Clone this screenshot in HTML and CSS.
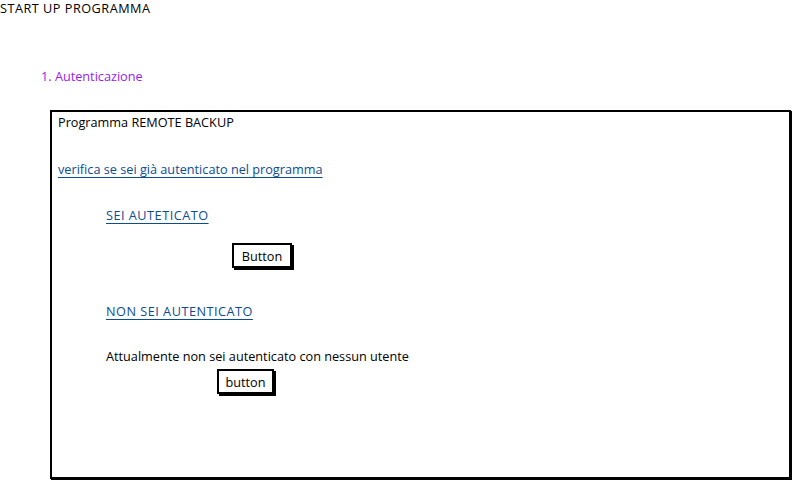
FILE: index.html
```html
<!DOCTYPE html>
<html>
<head>
<meta charset="utf-8">
<link rel="stylesheet" href="styles.css">
</head>
<body>
<div class="title caps">START UP PROGRAMMA</div>
<div class="step">1. Autenticazione</div>
<div class="box">
  <div class="line">Programma REMOTE BACKUP</div>
  <div class="line link gap-verify">verifica se sei già autenticato nel programma</div>
  <div class="line link indent caps gap-sei">SEI AUTETICATO</div>
  <div class="btn btn-one">Button</div>
  <div class="line link indent caps gap-non">NON SEI AUTENTICATO</div>
  <div class="line indent gap-att">Attualmente non sei autenticato con nessun utente</div>
  <div class="btn btn-two">button</div>
</div>
</body>
</html>
```
FILE: styles.css
```css
html, body {
  margin: 0;
  padding: 0;
  background: #fff;
}
body {
  font-family: "Open Sans", "Liberation Sans", sans-serif;
  font-size: 12.7px;
  color: #000;
  width: 793px;
  height: 481px;
  overflow: hidden;
}
.caps {
  letter-spacing: 0.5px;
}
.title {
  line-height: 17px;
  height: 17px;
}
.step {
  margin-top: 50px;
  padding-left: 41px;
  line-height: 18px;
  height: 18px;
  color: #9a1cf0;
}
.box {
  margin-top: 25px;
  margin-left: 50px;
  width: 741px;
  height: 369px;
  box-sizing: border-box;
  border: 2px solid #000;
  box-shadow: 1px 1px 0 #000;
  padding: 1px 0 0 6px;
}
.line {
  line-height: 18px;
  height: 18px;
}
.link {
  color: #0b4c94;
  text-decoration: underline;
  text-underline-offset: 3px;
  width: max-content;
}
.indent {
  margin-left: 48px;
}
.gap-verify { margin-top: 29px; }
.gap-sei { margin-top: 28px; }
.gap-non { margin-top: 34px; }
.gap-att { margin-top: 27px; }
.btn {
  box-sizing: border-box;
  height: 25px;
  border: 2px solid #000;
  box-shadow: 2px 2px 0 #000;
  display: flex;
  align-items: center;
  justify-content: center;
  background: #fff;
  width: 60px;
  font-weight: 500;
}
.btn-one {
  margin-top: 19px;
  margin-left: 174px;
}
.btn-two {
  margin-top: 4px;
  margin-left: 159px;
  width: 57px;
}
```
